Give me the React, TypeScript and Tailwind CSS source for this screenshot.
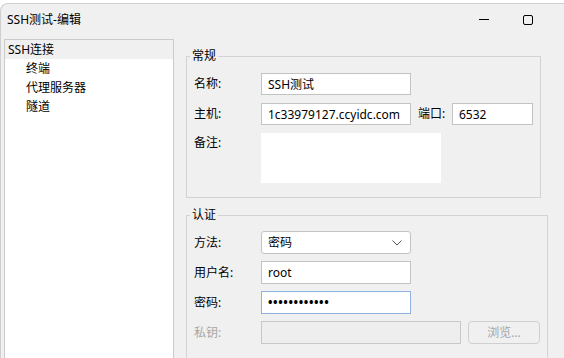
import React from 'react';

const font = "font-['Segoe_UI','Noto_Sans','Noto_Sans_CJK_SC',sans-serif]";
const inputStyle = "shrink-0 h-[22px] border border-[#c3c3c3] bg-white px-[6px] text-[12px] text-black outline-none";

const TreeItem: React.FC<{ label: string; level?: number; selected?: boolean }> = ({ label, level = 0, selected }) => (
  <div className={`h-[19px] flex items-center ${selected ? 'bg-[#f0f0f0]' : ''} ${level ? 'pl-[21px]' : 'pl-[3px]'}`}>
    {label}
  </div>
);

const Row: React.FC<{ label: string; disabled?: boolean; children: React.ReactNode; h?: string }> = ({ label, disabled, children, h = 'h-[22px]' }) => (
  <div className={`flex items-center ${h}`}>
    <span className={`w-[67px] shrink-0 ${disabled ? 'text-[#a6a6a6]' : 'text-black'}`}>{label}</span>
    {children}
  </div>
);

export default function App() {
  return (
    <div className={`${font} text-[12px] text-black bg-white h-[358px] w-[564px] overflow-hidden`}>
      <div className="mt-[3px] h-[355px] bg-[#f0f0f0] border-t border-l border-[#cfcfcf] rounded-tl-[8px] flex flex-col">
        {/* title bar */}
        <div className="h-[35px] flex items-center pl-[6px] pr-[31px] shrink-0">
          <span className="-mt-[4px]">SSH测试-编辑</span>
          <div className="ml-auto flex items-center gap-[34px] -mt-[4px]">
            <div className="w-[10px] h-px bg-black" />
            <div className="w-[10px] h-[10px] border border-black rounded-[2px]" />
          </div>
        </div>

        <div className="flex pl-[3px] gap-[12px]">
          {/* tree */}
          <div className="w-[170px] h-[330px] shrink-0 border border-[#cbcbcb] bg-white">
            <TreeItem label="SSH连接" selected />
            <TreeItem label="终端" level={1} />
            <TreeItem label="代理服务器" level={1} />
            <TreeItem label="隧道" level={1} />
          </div>

          {/* settings */}
          <div className="flex flex-col gap-[9px] mt-[9px]">
            <fieldset className="w-[354px] border border-[#d3d3d3] px-[7px] pt-[9px] pb-[14px]">
              <legend className="-ml-[4px] px-[2px] leading-[16px]">常规</legend>
              <div className="flex flex-col gap-[8px]">
                <Row label="名称:">
                  <input readOnly value="SSH测试" className={`${inputStyle} w-[150px]`} />
                </Row>
                <Row label="主机:">
                  <input readOnly value="1c33979127.ccyidc.com" className={`${inputStyle} w-[150px]`} />
                  <span className="ml-[7px] w-[34px] shrink-0">端口:</span>
                  <input readOnly value="6532" className={`${inputStyle} w-[81px]`} />
                </Row>
                <div className="flex items-start h-[50px]">
                  <span className="w-[67px] mt-[1px]">备注:</span>
                  <div className="w-[180px] h-[50px] bg-white" />
                </div>
              </div>
            </fieldset>

            <fieldset className="w-[362px] border border-[#d3d3d3] px-[7px] pt-[8px] pb-[30px]">
              <legend className="-ml-[4px] px-[2px] leading-[16px]">认证</legend>
              <div className="flex flex-col gap-[7px]">
                <Row label="方法:" h="h-[23px]">
                  <div className="w-[150px] h-[23px] shrink-0 border border-[#c3c3c3] rounded-[3px] bg-white flex items-center pl-[6px] pr-[8px]">
                    <span>密码</span>
                    <svg className="ml-auto" width="10" height="6" viewBox="0 0 10 6" fill="none">
                      <path d="M0.5 0.5 L5 5 L9.5 0.5" stroke="#555" strokeWidth="1" />
                    </svg>
                  </div>
                </Row>
                <Row label="用户名:" h="h-[23px]">
                  <input readOnly value="root" className={`${inputStyle} h-[23px] w-[150px]`} />
                </Row>
                <Row label="密码:" h="h-[23px]">
                  <div className="w-[150px] h-[23px] shrink-0 border border-[#8db2e0] bg-white flex items-center pl-[6px] text-[12px] tracking-[0.6px] font-bold">
                    ••••••••••••
                  </div>
                </Row>
                <Row label="私钥:" disabled h="h-[23px]">
                  <div className="w-[200px] h-[23px] shrink-0 border border-[#c8c8c8] bg-[#eeeeee]" />
                  <button className="ml-[7px] w-[72px] h-[23px] shrink-0 border border-[#cfcfcf] rounded-[4px] bg-[#f0f0f0] text-[#a6a6a6]">浏览...</button>
                </Row>
              </div>
            </fieldset>
          </div>
        </div>
      </div>
    </div>
  );
}
